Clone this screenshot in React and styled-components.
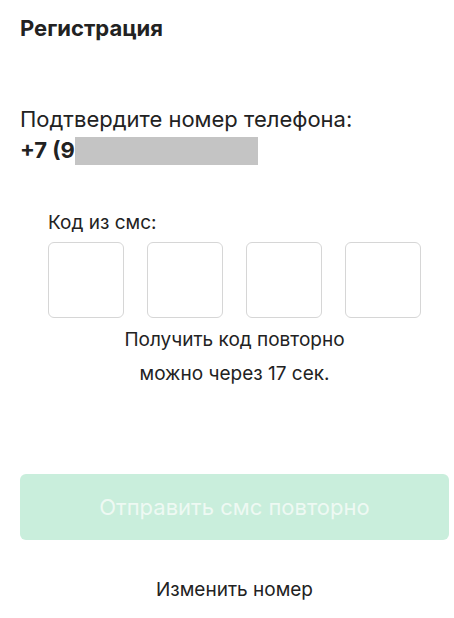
import React, { useState } from 'react';
import styled, { createGlobalStyle } from 'styled-components';

const GlobalStyle = createGlobalStyle`
    body{
        margin: 0;
        background: #ffffff;
        font-family: Inter, "Noto Sans", sans-serif;
        color: #222222;
    }
`;

const Page = styled.div`
    width: 454px;
    box-sizing: border-box;
    padding: 13px 5px 0 20px;
    display: flex;
    flex-direction: column;
`;

const Title = styled.h1`
    margin: 0;
    font-size: 22px;
    font-weight: 700;
    line-height: 30px;
    color: #222222;
`;

const PhoneBlock = styled.div`
    margin-top: 61px;
    display: flex;
    flex-direction: column;
    font-size: 22px;
    line-height: 31px;
`;

const PhoneRow = styled.div`
    display: flex;
    align-items: center;
    font-weight: 700;
`;

const Hidden = styled.span`
    display: inline-block;
    width: 183px;
    height: 28px;
    background: #c4c4c4;
`;

const CodeSection = styled.div`
    margin-top: 45px;
    padding: 0 28px;
    display: flex;
    flex-direction: column;
`;

const Label = styled.label`
    font-size: 19px;
    line-height: 24px;
    margin-bottom: 7px;
`;

const Cells = styled.div`
    display: flex;
    justify-content: space-between;
`;

const Cell = styled.input`
    width: 76px;
    height: 76px;
    box-sizing: border-box;
    border: 1px solid #d6d6d6;
    border-radius: 6px;
    text-align: center;
    font-size: 28px;
    font-family: inherit;
    outline: none;
    &:focus{
        border-color: #7fd3a9;
    }
`;

const Hint = styled.p`
    margin: 5px 0 0;
    text-align: center;
    font-size: 19px;
    line-height: 34px;
`;

const SendButton = styled.button`
    margin-top: 83px;
    height: 66px;
    border: none;
    border-radius: 6px;
    background: ${p => p.disabled ? '#c9eedc' : '#2fb46e'};
    color: ${p => p.disabled ? '#eef9f3' : '#ffffff'};
    font-family: inherit;
    font-size: 22px;
`;

const LinkButton = styled.button`
    margin-top: 38px;
    align-self: center;
    border: none;
    background: none;
    font-family: inherit;
    font-size: 19px;
    color: #222222;
    padding: 0;
    cursor: pointer;
`;

const App = () => {
    const [code, setCode] = useState(['', '', '', '']);
    const [seconds] = useState(17);

    const handleChange = (i, value) => {
        const next = [...code];
        next[i] = value.slice(-1);
        setCode(next);
    };

    return (
        <Page>
            <GlobalStyle/>
            <Title>Регистрация</Title>
            <PhoneBlock>
                <span>Подтвердите номер телефона:</span>
                <PhoneRow>+7 (9<Hidden/></PhoneRow>
            </PhoneBlock>
            <CodeSection>
                <Label>Код из смс:</Label>
                <Cells>
                    {code.map((c, i) => (
                        <Cell key={'cell_' + i} value={c} inputMode="numeric" onChange={e => handleChange(i, e.target.value)}/>
                    ))}
                </Cells>
                <Hint>Получить код повторно<br/>можно через {seconds} сек.</Hint>
            </CodeSection>
            <SendButton disabled={seconds > 0}>Отправить смс повторно</SendButton>
            <LinkButton>Изменить номер</LinkButton>
        </Page>
    );
};

export default App;
